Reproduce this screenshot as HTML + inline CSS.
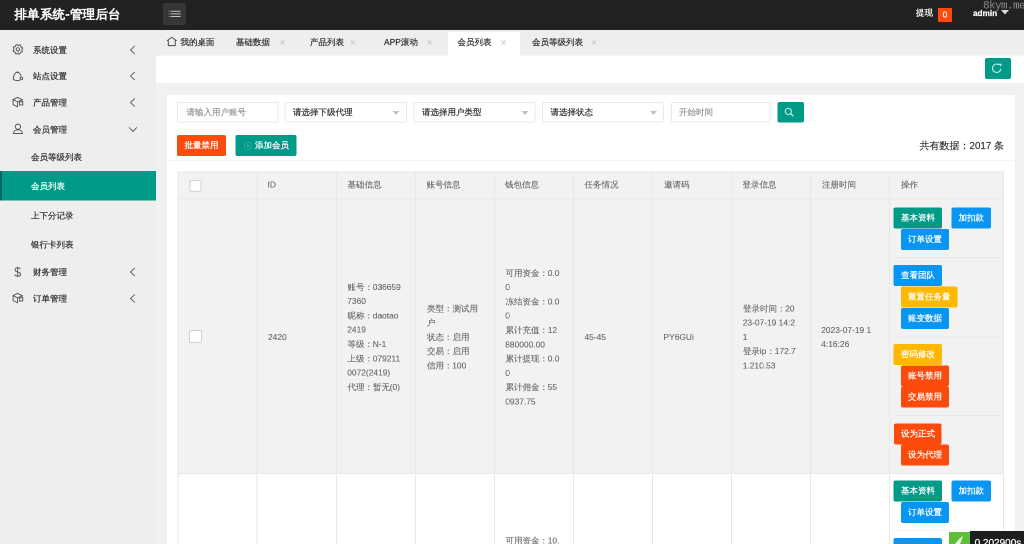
<!DOCTYPE html>
<html><head><meta charset="utf-8">
<style>html,body{width:1024px;height:544px;overflow:hidden;margin:0}
#root{position:absolute;left:0;top:0;width:2048px;height:1088px;transform:scale(.5);transform-origin:0 0;overflow:hidden;will-change:transform}

*{margin:0;padding:0;box-sizing:border-box}

body{position:relative;background:#f1f1f1;font-family:"Liberation Sans",sans-serif;font-size:16.8px;color:#333;-webkit-text-stroke-width:0.44px}
.a{position:absolute;white-space:nowrap}
#hdr{left:0;top:0;width:2048px;height:60px;background:#222}
#side{left:0;top:60px;width:312px;height:1028px;background:#eee}
#tabs{left:312px;top:60px;width:1736px;height:51px;background:#eee}
#bar{left:312px;top:111px;width:1736px;height:54.6px;background:#fff}
#card{left:334px;top:190px;width:1696px;height:920px;background:#fff}
.t{line-height:24px;height:24px}
.mi{color:#333}
.arr{color:#777}
.tab{color:#333}
.x{color:#c8c8c8;font-size:18px}
.inp{background:#fff;border:2px solid #eaeaea;border-radius:4px;height:41px;top:204px}
.ph{color:#999}
.btn{color:#fff;text-align:center;border-radius:4px;line-height:42px;height:42px}
.g{background:#009a88}.b{background:#0896f2}.o{background:#FFB800}.r{background:#FC4B0C}
.th{color:#666;-webkit-text-stroke-width:0.2px}
.td{margin-left:0.5px;color:#666;-webkit-text-stroke-width:0.2px;line-height:28.6px;white-space:normal;word-break:break-all}
.vl{width:2px;background:#e8e8e8}
.hl{height:2px;background:#e8e8e8}
.cb{width:26px;height:26px;background:#fff;border:2px solid #d2d2d2;border-radius:4px}
</style></head><body><div id="root">

<!-- header -->
<div id="hdr" class="a">
  <div class="a" style="left:28.6px;top:13px;font-size:25.2px;line-height:30px;letter-spacing:0.56px;-webkit-text-stroke-width:1.2px;color:#fff">排单系统-管理后台</div>
  <div class="a" style="left:326px;top:6px;width:46px;height:44px;background:#363636;border-radius:4px">
    <svg class="a" style="left:10px;top:14px" width="26" height="24" viewBox="168 10 13 12"><path d="M170.6 11.3H180.6M170.6 13.9H180.6M170.6 16.5H180.6" stroke="#c4c4c4" stroke-width="1"/><path d="M168.6 11.3H169.6M168.6 13.9H169.6M168.6 16.5H169.6" stroke="#999" stroke-width="1"/></svg>
  </div>
  <div class="a t" style="left:1832px;top:14px;color:#fff">提现</div>
  <div class="a" style="left:1876px;top:16px;width:28px;height:28px;background:#FC4B0C;color:#fff;text-align:center;line-height:28px;font-size:16.8px">0</div>
  <div class="a t" style="left:1946px;top:14px;color:#fff;font-size:16.4px;font-weight:bold">admin</div>
  <svg class="a" style="left:2002px;top:20px" width="16" height="10" viewBox="0 0 8 5"><path d="M0 0H8L4 4.5Z" fill="#ddd"/></svg>
  <div class="a" style="left:1966px;top:-1.6px;font-family:'Liberation Mono',monospace;font-size:22px;letter-spacing:-1.2px;line-height:28px;color:#8a8a8a;-webkit-text-stroke-width:0">8kym.me</div>
</div>

<!-- sidebar -->
<div id="side" class="a">
  <div class="a t mi" style="left:66px;top:28.8px">系统设置</div>
  <div class="a t mi" style="left:66px;top:80.8px">站点设置</div>
  <div class="a t mi" style="left:66px;top:133.8px">产品管理</div>
  <div class="a t mi" style="left:66px;top:187.8px">会员管理</div>
  <div class="a t mi" style="left:62px;top:242.8px">会员等级列表</div>
  <div class="a" style="left:0;top:282.4px;width:312px;height:58.6px;background:#009a88"></div>
  <div class="a" style="left:0;top:282.4px;width:4px;height:58.6px;background:#00695c"></div>
  <div class="a t" style="left:62px;top:300.8px;color:#fff">会员列表</div>
  <div class="a t mi" style="left:62px;top:359.8px">上下分记录</div>
  <div class="a t mi" style="left:62px;top:417.8px">银行卡列表</div>
  <div class="a t mi" style="left:66px;top:472.8px">财务管理</div>
  <div class="a t mi" style="left:66px;top:525.8px">订单管理</div>
  <!-- arrows -->
  <svg class="a" style="left:258px;top:30px" width="14" height="20" viewBox="0 0 7 10"><path d="M5.8 1L1.5 5L5.8 9" stroke="#666" stroke-width="1" fill="none"/></svg>
  <svg class="a" style="left:258px;top:82px" width="14" height="20" viewBox="0 0 7 10"><path d="M5.8 1L1.5 5L5.8 9" stroke="#666" stroke-width="1" fill="none"/></svg>
  <svg class="a" style="left:258px;top:135px" width="14" height="20" viewBox="0 0 7 10"><path d="M5.8 1L1.5 5L5.8 9" stroke="#666" stroke-width="1" fill="none"/></svg>
  <svg class="a" style="left:256px;top:192px" width="20" height="14" viewBox="0 0 10 7"><path d="M1 1.2L5 5.5L9 1.2" stroke="#666" stroke-width="1" fill="none"/></svg>
  <svg class="a" style="left:258px;top:474px" width="14" height="20" viewBox="0 0 7 10"><path d="M5.8 1L1.5 5L5.8 9" stroke="#666" stroke-width="1" fill="none"/></svg>
  <svg class="a" style="left:258px;top:527px" width="14" height="20" viewBox="0 0 7 10"><path d="M5.8 1L1.5 5L5.8 9" stroke="#666" stroke-width="1" fill="none"/></svg>
  <!-- icons -->
  
  
  
  
  
  
</div>

<!-- tabs -->
<div id="tabs" class="a">
  <div class="a" style="left:584px;top:3.6px;width:144px;height:47.4px;background:#fff"></div>
  
  <div class="a t tab" style="left:49px;top:13px">我的桌面</div>
  <div class="a t tab" style="left:160px;top:13px">基础数据</div>
  <div class="a t x" style="left:248px;top:13px">×</div>
  <div class="a t tab" style="left:308px;top:13px">产品列表</div>
  <div class="a t x" style="left:388px;top:13px">×</div>
  <div class="a t tab" style="left:456px;top:13px">APP滚动</div>
  <div class="a t x" style="left:542px;top:13px">×</div>
  <div class="a t tab" style="left:603px;top:13px">会员列表</div>
  <div class="a t x" style="left:690px;top:13px">×</div>
  <div class="a t tab" style="left:752px;top:13px">会员等级列表</div>
  <div class="a t x" style="left:871px;top:13px">×</div>
</div>

<!-- top white bar -->
<div id="bar" class="a">
  <div class="a" style="left:1658px;top:5px;width:52px;height:42px;background:#009a88;border-radius:4px">
    
  </div>
</div>

<!-- card -->
<div id="card" class="a">
  <!-- search -->
  <div class="a inp" style="left:20px;top:14px;width:203px"><div class="a t ph" style="left:17px;top:7px">请输入用户账号</div></div>
  <div class="a inp" style="left:235px;top:14px;width:245px"><div class="a t" style="left:15px;top:7px">请选择下级代理</div><svg class="a" style="left:214px;top:16px" width="14" height="8" viewBox="0 0 7 4"><path d="M0 0H7L3.5 4Z" fill="#c2c2c2"/></svg></div>
  <div class="a inp" style="left:493px;top:14px;width:244px"><div class="a t" style="left:15px;top:7px">请选择用户类型</div><svg class="a" style="left:214px;top:16px" width="14" height="8" viewBox="0 0 7 4"><path d="M0 0H7L3.5 4Z" fill="#c2c2c2"/></svg></div>
  <div class="a inp" style="left:750px;top:14px;width:244px"><div class="a t" style="left:15px;top:7px">请选择状态</div><svg class="a" style="left:214px;top:16px" width="14" height="8" viewBox="0 0 7 4"><path d="M0 0H7L3.5 4Z" fill="#c2c2c2"/></svg></div>
  <div class="a inp" style="left:1008px;top:14px;width:199px"><div class="a t ph" style="left:14px;top:7px">开始时间</div></div>
  <div class="a" style="left:1221px;top:14px;width:53px;height:41px;background:#009a88;border-radius:4px">
    
  </div>
  <!-- action buttons -->
  <div class="a btn r" style="left:20px;top:80px;width:98px">批量禁用</div>
  <div class="a btn g" style="left:137px;top:80px;width:122px">
    
    <span class="a" style="left:39px;top:0">添加会员</span>
  </div>
  <div class="a t" style="left:1505px;top:87px;color:#333;font-size:19.6px;line-height:28px;-webkit-text-stroke-width:0.3px">共有数据：2017 条</div>
  <div class="a hl" style="left:0;top:130px;width:1696px;background:#f6f6f6"></div>

  <!-- table -->
  <div class="a" style="left:21px;top:153px;width:1652px;height:54px;background:#f2f2f2"></div>
  <div class="a" style="left:21px;top:207px;width:1652px;height:549px;background:#f2f2f2"></div>
  <div class="a hl" style="left:21px;top:153px;width:1652px"></div>
  <div class="a hl" style="left:21px;top:207px;width:1652px"></div>
  <div class="a hl" style="left:21px;top:756px;width:1652px"></div>
  <div class="a vl" style="left:21px;top:153px;height:800px"></div>
  <div class="a vl" style="left:179px;top:153px;height:800px"></div>
  <div class="a vl" style="left:338px;top:153px;height:800px"></div>
  <div class="a vl" style="left:496px;top:153px;height:800px"></div>
  <div class="a vl" style="left:654px;top:153px;height:800px"></div>
  <div class="a vl" style="left:812px;top:153px;height:800px"></div>
  <div class="a vl" style="left:970px;top:153px;height:800px"></div>
  <div class="a vl" style="left:1128px;top:153px;height:800px"></div>
  <div class="a vl" style="left:1286px;top:153px;height:800px"></div>
  <div class="a vl" style="left:1444px;top:153px;height:800px"></div>
  <div class="a vl" style="left:1672px;top:153px;height:800px"></div>

  <!-- header cells -->
  <div class="a cb" style="left:45px;top:170px;width:24px;height:24px"></div>
  <div class="a t th" style="left:201px;top:168px">ID</div>
  <div class="a t th" style="left:361px;top:168px">基础信息</div>
  <div class="a t th" style="left:519px;top:168px">账号信息</div>
  <div class="a t th" style="left:676px;top:168px">钱包信息</div>
  <div class="a t th" style="left:835px;top:168px">任务情况</div>
  <div class="a t th" style="left:994px;top:168px">邀请码</div>
  <div class="a t th" style="left:1151px;top:168px">登录信息</div>
  <div class="a t th" style="left:1310px;top:168px">注册时间</div>
  <div class="a t th" style="left:1468px;top:168px">操作</div>

  <!-- row 1 -->
  <div class="a cb" style="left:44px;top:470.4px"></div>
  <div class="a t th" style="left:202px;top:472.6px">2420</div>
  <div class="a td" style="left:360px;top:370.6px;width:110px">账号：0366597360<br>昵称：daotao2419<br>等级：N-1<br>上级：0792110072(2419)<br>代理：暂无(0)</div>
  <div class="a td" style="left:519px;top:413.6px;width:110px">类型：测试用户<br>状态：启用<br>交易：启用<br>信用：100</div>
  <div class="a td" style="left:676px;top:342.6px;width:110px">可用资金：0.00<br>冻结资金：0.00<br>累计充值：12880000.00<br>累计提现：0.00<br>累计佣金：550937.75</div>
  <div class="a t th" style="left:835px;top:472.6px">45-45</div>
  <div class="a t th" style="left:993px;top:472.6px">PY6GUi</div>
  <div class="a td" style="left:1151px;top:413.6px;width:110px">登录时间：2023-07-19 14:21<br>登录ip：172.71.210.53</div>
  <div class="a td" style="left:1308px;top:456.6px;width:110px">2023-07-19 14:16:26</div>

  <!-- ops row1 -->
  <div class="a btn g" style="left:1453px;top:225px;width:97px">基本资料</div>
  <div class="a btn b" style="left:1569px;top:225px;width:79px">加扣款</div>
  <div class="a btn b" style="left:1468px;top:268px;width:96px">订单设置</div>
  <div class="a hl" style="left:1456px;top:324px;width:210px"></div>
  <div class="a btn b" style="left:1453px;top:340px;width:97px">查看团队</div>
  <div class="a btn o" style="left:1468px;top:382.6px;width:113px">重置任务量</div>
  <div class="a btn b" style="left:1468px;top:426px;width:96px">账变数据</div>
  <div class="a hl" style="left:1456px;top:483px;width:210px"></div>
  <div class="a btn o" style="left:1453px;top:498.4px;width:97px">密码修改</div>
  <div class="a btn r" style="left:1468px;top:540.6px;width:96px">账号禁用</div>
  <div class="a btn r" style="left:1468px;top:583px;width:96px">交易禁用</div>
  <div class="a hl" style="left:1456px;top:640px;width:210px"></div>
  <div class="a btn r" style="left:1454px;top:657.2px;width:95px">设为正式</div>
  <div class="a btn r" style="left:1468px;top:699px;width:96px">设为代理</div>

  <!-- row 2 -->
  <div class="a btn g" style="left:1453px;top:771.2px;width:97px">基本资料</div>
  <div class="a btn b" style="left:1569px;top:771.2px;width:79px">加扣款</div>
  <div class="a btn b" style="left:1468px;top:814.4px;width:96px">订单设置</div>
  <div class="a hl" style="left:1456px;top:870px;width:210px;background:#f4f4f4"></div>
  <div class="a btn b" style="left:1453px;top:886px;width:97px">查看团队</div>
  <div class="a td" style="left:676px;top:878px;width:110px">可用资金：10.00</div>
</div>


<!-- icons -->
<svg class="a" style="left:16px;top:80px" width="44" height="40" viewBox="8 40 22 20"><path d="M21.82 50.19 L22.52 51.04 L21.96 52.14 L20.87 52.08 L20.11 52.73 L20.00 53.82 L18.84 54.21 L18.11 53.39 L17.11 53.32 L16.26 54.02 L15.16 53.46 L15.22 52.37 L14.57 51.61 L13.48 51.50 L13.09 50.34 L13.91 49.61 L13.98 48.61 L13.28 47.76 L13.84 46.66 L14.93 46.72 L15.69 46.07 L15.80 44.98 L16.96 44.59 L17.69 45.41 L18.69 45.48 L19.54 44.78 L20.64 45.34 L20.58 46.43 L21.23 47.19 L22.32 47.30 L22.71 48.46 L21.89 49.19Z" stroke="#555" stroke-width="0.95" fill="none"/><circle cx="17.9" cy="49.4" r="1.7" stroke="#555" stroke-width="0.95" fill="none"/></svg>
<svg class="a" style="left:16px;top:132px" width="44" height="40" viewBox="8 66 22 20"><path d="M17.5 71.8C15 72.6 13 75.6 13.4 79.6C15.6 80.8 18 80.8 20 80.2M17.5 71.8C19.2 72.4 20.6 74.6 21.3 76.6" stroke="#555" stroke-width="0.95" fill="none"/><circle cx="17.5" cy="72.3" r="0.8" fill="#555"/><circle cx="21.3" cy="78.5" r="1.3" stroke="#555" stroke-width="0.95" fill="none"/></svg>
<svg class="a" style="left:16px;top:184px" width="44" height="40" viewBox="8 92 22 20"><path d="M13.1 99.6L17.6 97.4L22.1 99.6L17.6 101.9Z M13.1 99.6V104.6L17.6 106.8V101.9 M22.1 99.6V101.6" stroke="#555" stroke-width="0.95" fill="none"/><rect x="19.6" y="101.8" width="3.2" height="3.2" stroke="#555" stroke-width="0.95" fill="none"/></svg>
<svg class="a" style="left:16px;top:238px" width="44" height="40" viewBox="8 119 22 20"><circle cx="17.9" cy="126.7" r="2.6" stroke="#555" stroke-width="0.95" fill="none"/><path d="M13.4 133.5C13.6 131 15.6 129.8 17.9 129.8C20.2 129.8 22.3 131 22.5 133.5Z" stroke="#555" stroke-width="0.95" fill="none"/></svg>
<svg class="a" style="left:16px;top:524px" width="44" height="40" viewBox="8 262 22 20"><path d="M20.4 269C19.8 268 18.8 267.7 17.7 267.7C16.1 267.7 15 268.6 15 269.9C15 272.8 20.7 271.3 20.7 274.2C20.7 275.5 19.4 276.1 17.7 276.1C16.3 276.1 15.2 275.5 14.7 274.5M17.7 266.8V277" stroke="#555" stroke-width="0.95" fill="none"/></svg>
<svg class="a" style="left:16px;top:576px" width="44" height="40" viewBox="8 288 22 20"><path d="M13.1 295.6L17.6 293.4L22.1 295.6L17.6 297.9Z M13.1 295.6V300.6L17.6 302.8V297.9 M22.1 295.6V297.6" stroke="#555" stroke-width="0.95" fill="none"/><rect x="19.6" y="297.8" width="3.2" height="3.2" stroke="#555" stroke-width="0.95" fill="none"/></svg>
<svg class="a" style="left:326px;top:68px" width="36" height="32" viewBox="163 34 18 16"><path d="M166.9 40.9L171.8 37.3L176.6 40.9M168.3 40.1V45.6H175.2V40.1" stroke="#444" stroke-width="0.95" fill="none"/></svg>
<svg class="a" style="left:1968px;top:114px" width="56" height="46" viewBox="984 57 28 23"><path d="M1000.9 68.8A4.2 4.2 0 1 1 999.3 64.9" stroke="#c5ebe5" stroke-width="1.1" fill="none"/><path d="M998.6 63.6L1001.8 63.7L1000.9 66.8Z" fill="#c5ebe5"/></svg>
<svg class="a" style="left:1552px;top:202px" width="58" height="46" viewBox="776 101 29 23"><circle cx="788.3" cy="111.4" r="3.1" stroke="#c5ebe5" stroke-width="1.1" fill="none"/><path d="M790.6 113.7L793.5 116.2" stroke="#c5ebe5" stroke-width="1.3"/></svg>
<svg class="a" style="left:468px;top:268px" width="60" height="48" viewBox="234 134 30 24"><circle cx="247.9" cy="145.7" r="3.6" stroke="#3aaca0" stroke-width="0.8" fill="none"/><circle cx="247.9" cy="145.7" r="0.9" fill="#5cc4b8"/></svg>
<!-- bottom right trace -->
<div class="a" style="left:1898px;top:1064px;width:42px;height:24px;background:#5fbf3a">
  <svg class="a" style="left:8px;top:6px" width="24" height="18" viewBox="0 0 12 9"><path d="M2 9C4 6 7 3 10 1C9 4 8 7 7 9Z" fill="#e8f6df"/></svg>
</div>
<div class="a" style="left:1940px;top:1062px;width:108px;height:26px;background:#1e1e1e">
  <div class="a" style="left:9.2px;top:11px;color:#fff;font-size:20px;line-height:24px">0.202900s</div>
</div>

</div></body></html>
